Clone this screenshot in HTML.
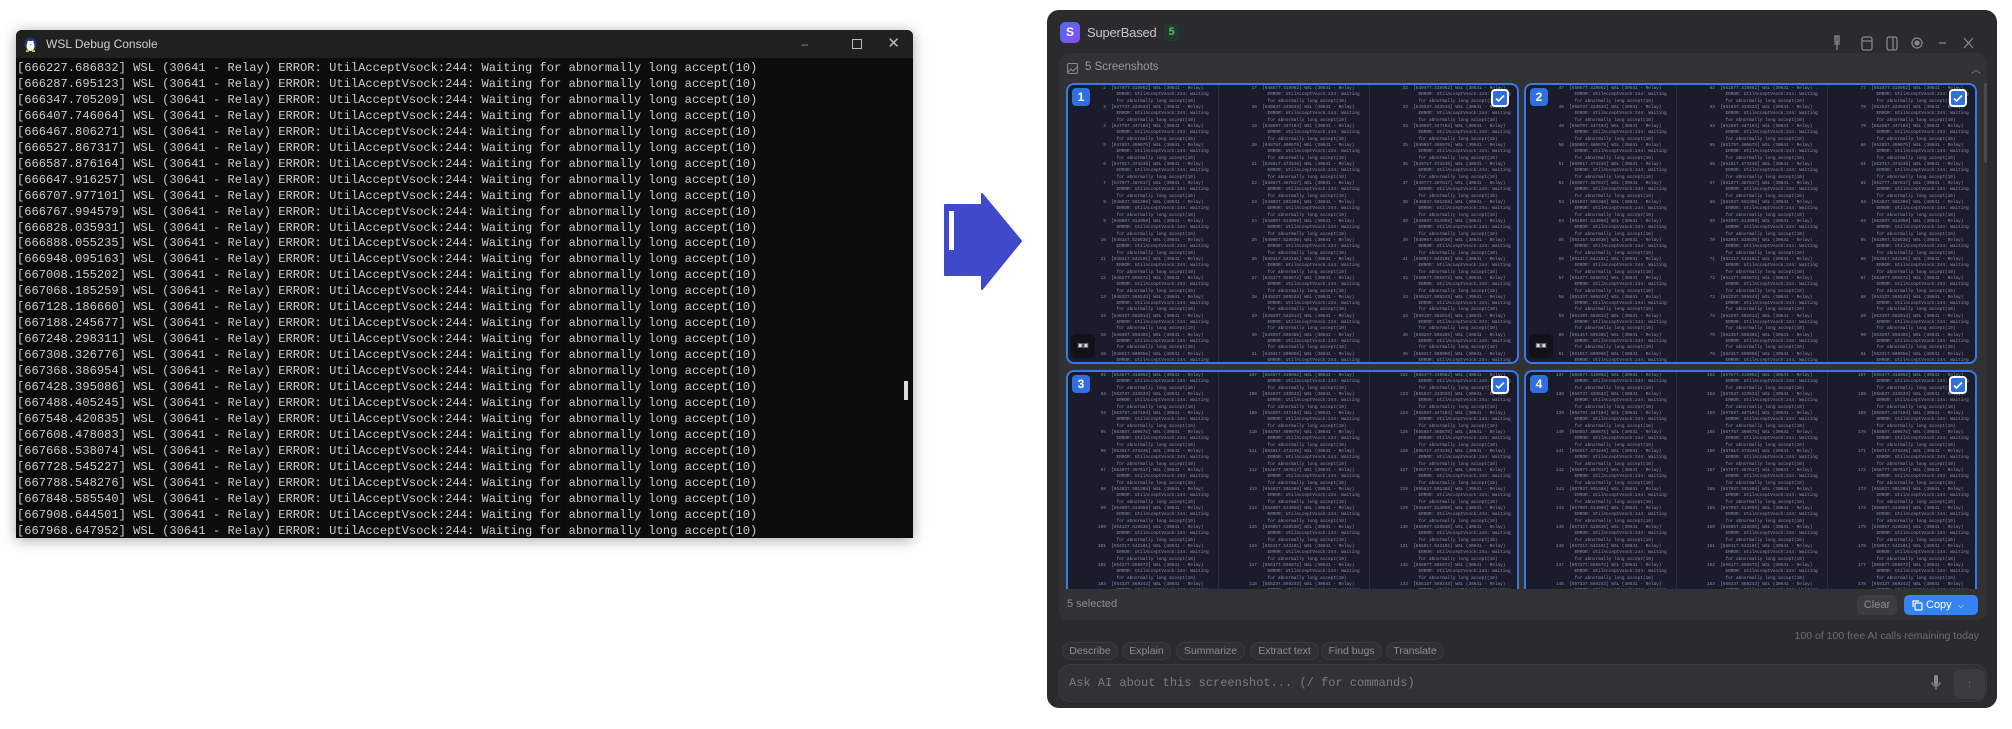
<!DOCTYPE html>
<html><head><meta charset="utf-8">
<style>
*{margin:0;padding:0;box-sizing:border-box}
body{width:2012px;height:729px;background:#fff;position:relative;overflow:hidden;font-family:"Liberation Sans",sans-serif}
.abs{position:absolute}
#con{left:16px;top:30px;width:897px;height:508px;background:#0c0c0c;box-shadow:0 2px 14px rgba(0,0,0,.35);border-radius:6px 6px 0 0;overflow:hidden}
#con .tb{height:28px;background:#202020;color:#cfcfcf;font-size:12px;line-height:28px;padding-left:30px;position:relative}
#con pre{font-family:"Liberation Mono",monospace;font-size:12.1px;line-height:15.95px;color:#cccccc;padding:3px 0 0 1px;letter-spacing:0px}
#app{left:1047px;top:10px;width:950px;height:698px;background:#2b2b2d;border-radius:12px;overflow:hidden}
.th{position:absolute;width:453px;height:281px;background:#1b1c2b;border:2px solid #3a78e6;border-radius:8px;overflow:hidden}
.col{position:absolute;top:0;width:151px;height:100%;border-right:1px solid #2c2e3d;font-family:"Liberation Mono",monospace;font-size:4.4px;line-height:6.33px;color:#8a90a4;white-space:pre}
.badge{position:absolute;left:4px;top:3px;width:18px;height:18px;background:#2f6fe0;border-radius:4px;color:#fff;font-size:12px;font-weight:bold;text-align:center;line-height:18px}
.chk{position:absolute;right:8px;top:4px;width:18px;height:18px;background:#2f6fe0;border:2px solid #fff;border-radius:4px}
.chip{position:absolute;top:632px;height:18px;border:1px solid #3c3c3f;background:#303032;border-radius:9px;color:#8e8e92;font-size:10.5px;line-height:16px;text-align:center}
</style></head><body>

<div id="con" class="abs">
 <div class="tb"><svg class="abs" style="left:8px;top:7px" width="13" height="15" viewBox="0 0 13 15"><ellipse cx="6.5" cy="7.5" rx="6" ry="7" fill="#1e3a7a"/><ellipse cx="6.5" cy="9" rx="4" ry="5" fill="#fff"/><circle cx="4.5" cy="5" r="1.2" fill="#fff"/><circle cx="8.5" cy="5" r="1.2" fill="#fff"/><path d="M5 7h3l-1.5 1.5z" fill="#f5b000"/><rect x="2" y="13" width="3" height="2" fill="#f5b000"/><rect x="8" y="13" width="3" height="2" fill="#f5b000"/></svg>WSL Debug Console
  <span class="abs" style="right:105px;top:0;color:#999">–</span>
  <span class="abs" style="right:51px;top:9px;width:10px;height:10px;border:1px solid #bbb"></span>
  <span class="abs" style="right:13px;top:0;color:#bbb;font-size:15px">✕</span>
 </div>
<pre id="log"></pre>
 <div class="abs" style="left:888px;top:351px;width:4px;height:19px;background:#ddd"></div>
</div>

<svg class="abs" style="left:943px;top:192px" width="80" height="100" viewBox="0 0 80 100"><path d="M2 13 H39 V2 L78 49 L39 97 V83 H2 Z" fill="#3f49c9" stroke="#3f49c9" stroke-width="2" stroke-linejoin="round"/><rect x="6" y="19" width="5" height="39" fill="#fff"/></svg>

<div id="app" class="abs">
 <div class="abs" style="left:13px;top:12px;width:20px;height:21px;border-radius:5px;background:linear-gradient(135deg,#4f6cf5,#8a4cf0);color:#fff;font-weight:bold;font-size:12px;text-align:center;line-height:21px">S</div>
 <div class="abs" style="left:40px;top:15px;color:#c8c8cc;font-size:13px;letter-spacing:-0.2px">SuperBased</div>
 <div class="abs" style="left:117px;top:14px;width:15px;height:17px;background:#233a2a;border-radius:3px;color:#4cc06a;font-size:11px;text-align:center;line-height:17px;font-weight:bold">5</div>
 <svg class="abs" style="left:783px;top:24px" width="170" height="20" viewBox="0 0 170 20" fill="none" stroke="#86868a" stroke-width="1.3"><path d="M7 2v8M4 10h6M5 2h4v6H5zM7 10v6"/><rect x="32" y="3" width="10" height="13" rx="2"/><path d="M32 7h10"/><rect x="57" y="3" width="10" height="13" rx="2"/><path d="M63 3v13"/><circle cx="87" cy="9" r="5"/><circle cx="87" cy="9" r="2" fill="#86868a"/><path d="M109 9h7M134 4l9 10M143 4l-9 10"/></svg>

 <div class="abs" style="left:12px;top:43px;width:928px;height:567px;background:#323234;border-radius:10px;overflow:hidden">
  <svg class="abs" style="left:8px;top:10px" width="11" height="11" viewBox="0 0 11 11" fill="none" stroke="#8a8a8e"><rect x="0.5" y="0.5" width="10" height="10" rx="1.5"/><path d="M1 9l3-3 2 2 4-4"/></svg>
  <div class="abs" style="left:26px;top:8px;color:#9a9a9e;font-size:11.5px">5 Screenshots</div>
  <div class="abs" style="left:912px;top:8px;color:#8a8a8e;font-size:10px">︿</div>
  <div class="abs" style="left:925px;top:30px;width:3px;height:80px;background:#4a4a4d;border-radius:2px"></div>
  <div id="grid" class="abs" style="left:0;top:0;width:928px;height:536px;overflow:hidden"></div>
  <div class="abs" style="left:8px;top:545px;color:#8e8e92;font-size:11px">5 selected</div>
  <div class="abs" style="left:798px;top:542px;width:40px;height:20px;background:#3d3d40;border-radius:5px;color:#8e8e92;font-size:11px;text-align:center;line-height:20px">Clear</div>
  <div class="abs" style="left:845px;top:542px;width:74px;height:20px;background:#3583f0;border-radius:5px;color:#fff;font-size:11px;line-height:20px;padding-left:22px"><svg class="abs" style="left:7px;top:4px" width="12" height="12" viewBox="0 0 12 12" fill="none" stroke="#fff" stroke-width="1.2"><rect x="4" y="4" width="7" height="7" rx="1"/><path d="M2 8V2h6"/></svg>Copy <span style="font-size:8px;margin-left:3px">⌵</span></div>
 </div>
 <div class="abs" style="right:18px;top:620px;color:#6e6e72;font-size:10.5px">100 of 100 free AI calls remaining today</div>
 <div class="chip" style="left:15px;width:56px">Describe</div>
 <div class="chip" style="left:75px;width:49px">Explain</div>
 <div class="chip" style="left:129px;width:69px">Summarize</div>
 <div class="chip" style="left:203px;width:69px">Extract text</div>
 <div class="chip" style="left:274px;width:61px">Find bugs</div>
 <div class="chip" style="left:339px;width:58px">Translate</div>
 <div class="abs" style="left:11px;top:654px;width:929px;height:38px;background:#323234;border:1px solid #3a3a3d;border-radius:12px">
  <div class="abs" style="left:10px;top:11px;font-family:'Liberation Mono',monospace;font-size:12px;color:#7c7c80">Ask AI about this screenshot... (/ for commands)</div>
  <svg class="abs" style="left:872px;top:10px" width="10" height="16" viewBox="0 0 10 16" fill="#8a8a8e"><rect x="3" y="0" width="4" height="10" rx="2"/><path d="M1 7a4 4 0 0 0 8 0" fill="none" stroke="#8a8a8e" stroke-width="1.2"/><rect x="4.4" y="11" width="1.2" height="4"/></svg>
  <div class="abs" style="left:895px;top:4px;width:31px;height:30px;background:#3a3c42;border-radius:7px;color:#555861;text-align:center;line-height:30px;font-size:13px">↑</div>
 </div>
</div>

<script>
var l='';
var ts=["666227.686832","666287.695123","666347.705209","666407.746064","666467.806271","666527.867317","666587.876164","666647.916257","666707.977101","666767.994579","666828.035931","666888.055235","666948.095163","667008.155202","667068.185259","667128.186660","667188.245677","667248.298311","667308.326776","667368.386954","667428.395086","667488.405245","667548.420835","667608.478083","667668.538074","667728.545227","667788.548276","667848.585540","667908.644501","667968.647952"];
ts.forEach(function(s){l+='['+s+'] WSL (30641 - Relay) ERROR: UtilAcceptVsock:244: Waiting for abnormally long accept(10)\n';});
document.getElementById('log').textContent=l;
var g=document.getElementById('grid'),pos=[[7,30,1],[465,30,2],[7,317,3],[465,317,4]];
pos.forEach(function(p,k){
 var d=document.createElement('div');d.className='th';d.style.left=p[0]+'px';d.style.top=p[1]+'px';
 var h='';
 for(var c=0;c<3;c++){
  var s='';var n=k*45+c*15+2;
  for(var e=0;e<15;e++){
   var num=(n+e)+'';while(num.length<3)num=' '+num;
   s+=num+'  ['+(647677+k*3000+c*900+e*60)+'.'+(419962+e*13571)%999999+'] WSL (30641 - Relay)\n       ERROR: UtilAcceptVsock:244: Waiting\n       for abnormally long accept(10)\n';
  }
  h+='<div class="col" style="left:'+(c*151)+'px;padding:1px 0 0 30px">'+s+'</div>';
 }
 h+='<div class="badge">'+p[2]+'</div><div class="chk"><svg width="14" height="14" viewBox="0 0 14 14" style="position:absolute;left:0;top:0"><path d="M3 7.5l2.5 2.5L11 4.5" fill="none" stroke="#fff" stroke-width="1.6"/></svg></div>';
 if(k<2)h+='<div style="position:absolute;left:3px;bottom:4px;width:24px;height:24px;background:#111219;border-radius:5px;color:#ddd;font-size:6px;text-align:center;line-height:24px">▣▣</div>';
 d.innerHTML=h;g.appendChild(d);
});
</script>
</body></html>
